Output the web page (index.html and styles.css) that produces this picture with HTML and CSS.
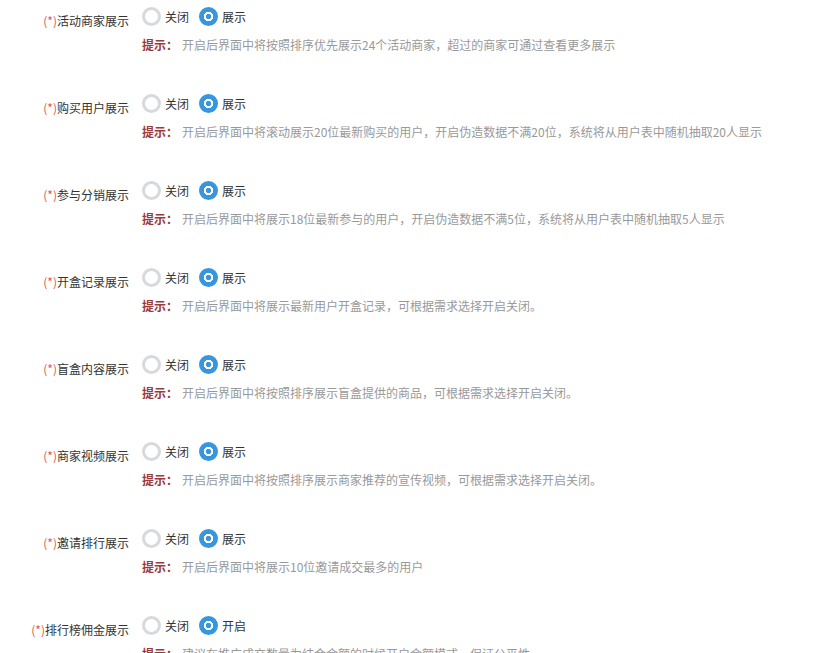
FILE: index.html
```html
<!DOCTYPE html>
<html lang="zh-CN">
<head>
    <meta charset="UTF-8">
    <title>展示设置</title>
    <link rel="stylesheet" href="styles.css">
</head>
<body>
    <div class="form">
        <div class="form-item">
            <label class="form-label"><span class="req">(*)</span>活动商家展示</label>
            <div class="form-body">
                <div class="radios">
                    <span class="radio"><i class="dot"></i>关闭</span>
                    <span class="radio checked"><i class="dot"></i>展示</span>
                </div>
                <p class="tip"><b>提示：</b>开启后界面中将按照排序优先展示24个活动商家，超过的商家可通过查看更多展示</p>
            </div>
        </div>
        <div class="form-item">
            <label class="form-label"><span class="req">(*)</span>购买用户展示</label>
            <div class="form-body">
                <div class="radios">
                    <span class="radio"><i class="dot"></i>关闭</span>
                    <span class="radio checked"><i class="dot"></i>展示</span>
                </div>
                <p class="tip"><b>提示：</b>开启后界面中将滚动展示20位最新购买的用户，开启伪造数据不满20位，系统将从用户表中随机抽取20人显示</p>
            </div>
        </div>
        <div class="form-item">
            <label class="form-label"><span class="req">(*)</span>参与分销展示</label>
            <div class="form-body">
                <div class="radios">
                    <span class="radio"><i class="dot"></i>关闭</span>
                    <span class="radio checked"><i class="dot"></i>展示</span>
                </div>
                <p class="tip"><b>提示：</b>开启后界面中将展示18位最新参与的用户，开启伪造数据不满5位，系统将从用户表中随机抽取5人显示</p>
            </div>
        </div>
        <div class="form-item">
            <label class="form-label"><span class="req">(*)</span>开盒记录展示</label>
            <div class="form-body">
                <div class="radios">
                    <span class="radio"><i class="dot"></i>关闭</span>
                    <span class="radio checked"><i class="dot"></i>展示</span>
                </div>
                <p class="tip"><b>提示：</b>开启后界面中将展示最新用户开盒记录，可根据需求选择开启关闭。</p>
            </div>
        </div>
        <div class="form-item">
            <label class="form-label"><span class="req">(*)</span>盲盒内容展示</label>
            <div class="form-body">
                <div class="radios">
                    <span class="radio"><i class="dot"></i>关闭</span>
                    <span class="radio checked"><i class="dot"></i>展示</span>
                </div>
                <p class="tip"><b>提示：</b>开启后界面中将按照排序展示盲盒提供的商品，可根据需求选择开启关闭。</p>
            </div>
        </div>
        <div class="form-item">
            <label class="form-label"><span class="req">(*)</span>商家视频展示</label>
            <div class="form-body">
                <div class="radios">
                    <span class="radio"><i class="dot"></i>关闭</span>
                    <span class="radio checked"><i class="dot"></i>展示</span>
                </div>
                <p class="tip"><b>提示：</b>开启后界面中将按照排序展示商家推荐的宣传视频，可根据需求选择开启关闭。</p>
            </div>
        </div>
        <div class="form-item">
            <label class="form-label"><span class="req">(*)</span>邀请排行展示</label>
            <div class="form-body">
                <div class="radios">
                    <span class="radio"><i class="dot"></i>关闭</span>
                    <span class="radio checked"><i class="dot"></i>展示</span>
                </div>
                <p class="tip"><b>提示：</b>开启后界面中将展示10位邀请成交最多的用户</p>
            </div>
        </div>
        <div class="form-item">
            <label class="form-label"><span class="req">(*)</span>排行榜佣金展示</label>
            <div class="form-body">
                <div class="radios">
                    <span class="radio"><i class="dot"></i>关闭</span>
                    <span class="radio checked"><i class="dot"></i>开启</span>
                </div>
                <p class="tip"><b>提示：</b>建议在推广成交数量为结合金额的时候开启金额模式，保证公平性</p>
            </div>
        </div>
    </div>
</body>
</html>
```

FILE: styles.css
```css
body { margin: 0; background: #fff; font-family: "Microsoft YaHei", "Noto Sans CJK SC", sans-serif; font-size: 12px; color: #333; overflow: hidden; }
.form { padding-top: 6px; }
.form-item { display: flex; height: 87px; }
.form-label { width: 129px; text-align: right; padding-top: 6px; line-height: 18px; color: #333; }
.req { color: #e2564f; }
.form-body { padding-left: 13px; }
.radios { display: flex; align-items: center; height: 21px; }
.radio { display: flex; align-items: center; margin-right: 10px; line-height: 18px; color: #333; }
.dot { display: block; width: 13px; height: 13px; border: 3px solid #d6dadd; border-radius: 50%; background: #fff; margin-right: 4px; }
.radio.checked .dot { border-color: #3796dd; background: radial-gradient(circle, #3796dd 0 2.4px, #fff 3px 4.5px, #3796dd 5px); }
.tip { margin: 9px 0 0; line-height: 18px; color: #999; }
.tip b { color: #9b3a3c; font-weight: bold; margin-right: 4px; }
```
